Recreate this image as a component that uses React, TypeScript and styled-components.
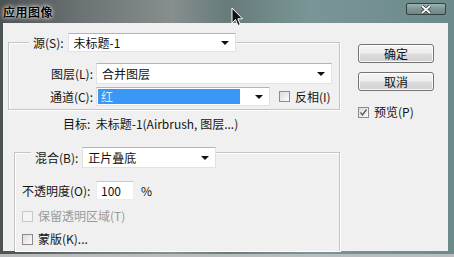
import React from "react";
import styled, { createGlobalStyle } from "styled-components";

const GlobalStyle = createGlobalStyle`
  html, body {
    margin: 0;
    padding: 0;
    background: #b9bdbd;
  }
  body {
    font-family: "Noto Sans CJK SC", "Liberation Sans", sans-serif;
    font-size: 12px;
    color: #111;
  }
`;

const Window = styled.div`
  position: relative;
  width: 454px;
  height: 254px;
  display: flex;
  flex-direction: column;
  background: linear-gradient(
    90deg,
    #4c5152 0%,
    #6c7374 18%,
    #878e8e 38%,
    #677b7b 50%,
    #7a9595 68%,
    #6c8a8a 100%
  );
`;

const TitleBar = styled.div`
  height: 23px;
  display: flex;
  align-items: center;
  justify-content: space-between;
  padding: 0 8px 0 3px;
  box-sizing: border-box;
`;

const Title = styled.span`
  font-size: 12px;
  font-weight: 700;
  color: #050505;
  letter-spacing: 0.5px;
  text-shadow: 0 0 2px #fff, 0 0 5px rgba(255, 255, 255, 0.85);
  margin-top: -1px;
`;

const CloseButton = styled.div`
  position: absolute;
  left: 406px;
  top: 3px;
  width: 40px;
  height: 12px;
  box-sizing: border-box;
  border: 1px solid #324040;
  border-radius: 2px;
  background: linear-gradient(180deg, #9db1b1 0%, #7f9696 50%, #6d8686 100%);
  display: flex;
  align-items: center;
  justify-content: center;
`;

const Cursor = styled.svg`
  position: absolute;
  left: 231px;
  top: 7px;
`;

const Body = styled.div`
  flex: 1;
  margin: 0 6px 3px 3px;
  background: #f0f0f0;
  display: flex;
`;

const LeftCol = styled.div`
  width: 338px;
  display: flex;
  flex-direction: column;
`;

const GroupBox = styled.div<{ $top: number; $left: number; $width: number; $height?: number }>`
  margin: ${(p) => p.$top}px 0 0 ${(p) => p.$left}px;
  width: ${(p) => p.$width}px;
  ${(p) => (p.$height ? `height: ${p.$height}px;` : "flex: 1;")}
  box-sizing: border-box;
  border: 1px solid #c4c4c4;
  ${(p) => (p.$height ? "" : "border-bottom: none;")}
  box-shadow: inset 1px 1px 0 #fff, 1px 1px 0 #fff;
  display: flex;
  flex-direction: column;
`;

const Legend = styled.div<{ $lift: number; $indent: number }>`
  display: flex;
  align-items: center;
  align-self: flex-start;
  gap: 4px;
  margin: -${(p) => p.$lift}px 0 0 ${(p) => p.$indent}px;
  padding-left: 4px;
  background: #f0f0f0;
`;

const Label = styled.span<{ $width?: number; $right?: boolean; $dim?: boolean }>`
  display: inline-block;
  ${(p) => (p.$width ? `width: ${p.$width}px;` : "")}
  text-align: ${(p) => (p.$right ? "right" : "left")};
  color: ${(p) => (p.$dim ? "#9a9a9a" : "#151515")};
  white-space: nowrap;
  line-height: 16px;
`;

const Combo = styled.div<{ $width: number; $height: number }>`
  width: ${(p) => p.$width}px;
  height: ${(p) => p.$height}px;
  box-sizing: border-box;
  background: #fff;
  border: 1px solid #e2e2e2;
  border-top-color: #b4b4b4;
  display: flex;
  align-items: center;
  padding: 0 6px 0 5px;
  position: relative;
`;

const ComboText = styled.span<{ $selected?: boolean }>`
  flex: 1;
  line-height: 15px;
  align-self: stretch;
  display: flex;
  align-items: center;
  ${(p) =>
    p.$selected
      ? `background: #3a97f5; color: #dce9ff; margin: 1px 15px 1px -4px; padding-left: 3px;`
      : ""}
`;

const Arrow = styled.span`
  width: 0;
  height: 0;
  border-left: 4px solid transparent;
  border-right: 4px solid transparent;
  border-top: 4px solid #111;
`;

const Row = styled.div<{ $top: number; $indent?: number }>`
  display: flex;
  align-items: center;
  margin-top: ${(p) => p.$top}px;
  padding-left: ${(p) => p.$indent ?? 0}px;
  gap: 3px;
`;

const TargetLine = styled.div`
  margin: 6px 0 0 60px;
  line-height: 16px;
  white-space: nowrap;
  color: #151515;
`;

const Input = styled.div`
  width: 38px;
  height: 19px;
  box-sizing: border-box;
  background: #fff;
  border: 1px solid #ececec;
  border-top-color: #c8c8c8;
  padding-left: 4px;
  line-height: 17px;
`;

const Percent = styled.span`
  margin-left: 7px;
`;

const Box = styled.span<{ $disabled?: boolean }>`
  width: 11px;
  height: 11px;
  box-sizing: border-box;
  border: 1px solid ${(p) => (p.$disabled ? "#c8c8c8" : "#8c8c8c")};
  background: ${(p) =>
    p.$disabled ? "#f4f4f4" : "linear-gradient(135deg, #dcdcdc, #fbfbfb)"};
  display: inline-flex;
  align-items: center;
  justify-content: center;
  margin-right: 2px;
`;

const RightCol = styled.div`
  margin-left: 17px;
  padding-top: 21px;
  display: flex;
  flex-direction: column;
`;

const Button = styled.div<{ $gap: number }>`
  width: 76px;
  height: 19px;
  margin-top: ${(p) => p.$gap}px;
  box-sizing: border-box;
  border: 1px solid #747474;
  border-radius: 3px;
  background: linear-gradient(180deg, #f5f5f5 0%, #ececec 48%, #dcdcdc 52%, #d2d2d2 100%);
  box-shadow: inset 0 0 0 1px rgba(255, 255, 255, 0.8);
  display: flex;
  align-items: center;
  justify-content: center;
  line-height: 16px;
`;

function CheckBox({ checked, disabled }: { checked?: boolean; disabled?: boolean }) {
  return (
    <Box $disabled={disabled}>
      {checked && (
        <svg width="9" height="9" viewBox="0 0 9 9">
          <path d="M1.5 4.5 L3.5 7 L7.5 1.5" stroke="#4a5a6a" strokeWidth="1.3" fill="none" />
        </svg>
      )}
    </Box>
  );
}

export default function App() {
  return (
    <>
      <GlobalStyle />
      <Window>
        <TitleBar>
          <Title>应用图像</Title>
        </TitleBar>
        <CloseButton>
          <svg width="12" height="9" viewBox="0 0 12 9">
            <path d="M2 1 L10 8 M10 1 L2 8" stroke="#263030" strokeWidth="3.2" />
            <path d="M2 1 L10 8 M10 1 L2 8" stroke="#fff" strokeWidth="1.8" />
          </svg>
        </CloseButton>
        <Body>
          <LeftCol>
            <GroupBox $top={19} $left={5} $width={332} $height={68}>
              <Legend $lift={10} $indent={20}>
                <Label>源(S):</Label>
                <Combo $width={168} $height={19}>
                  <ComboText>未标题-1</ComboText>
                  <Arrow />
                </Combo>
              </Legend>
              <Row $top={11}>
                <Label $width={84} $right>
                  图层(L):
                </Label>
                <Combo $width={236} $height={21}>
                  <ComboText>合并图层</ComboText>
                  <Arrow />
                </Combo>
              </Row>
              <Row $top={3}>
                <Label $width={84} $right>
                  通道(C):
                </Label>
                <Combo $width={174} $height={19}>
                  <ComboText $selected>红</ComboText>
                  <Arrow />
                </Combo>
                <Row $top={0} $indent={6}>
                  <CheckBox />
                  <Label>反相(I)</Label>
                </Row>
              </Row>
            </GroupBox>
            <TargetLine>目标:&nbsp;&nbsp;未标题-1(Airbrush, 图层...)</TargetLine>
            <GroupBox $top={20} $left={11} $width={326}>
              <Legend $lift={6} $indent={16}>
                <Label>混合(B):</Label>
                <Combo $width={134} $height={21}>
                  <ComboText>正片叠底</ComboText>
                  <Arrow />
                </Combo>
              </Legend>
              <Row $top={13} $indent={7} style={{ gap: 0 }}>
                <Label $width={74}>不透明度(O):</Label>
                <Input>100</Input>
                <Percent>%</Percent>
              </Row>
              <Row $top={8} $indent={7}>
                <CheckBox disabled />
                <Label $dim>保留透明区域(T)</Label>
              </Row>
              <Row $top={7} $indent={7}>
                <CheckBox />
                <Label>蒙版(K)...</Label>
              </Row>
            </GroupBox>
          </LeftCol>
          <RightCol>
            <Button $gap={0}>确定</Button>
            <Button $gap={9}>取消</Button>
            <Row $top={13}>
              <CheckBox checked />
              <Label>预览(P)</Label>
            </Row>
          </RightCol>
        </Body>
        <Cursor width="13" height="21" viewBox="0 0 13 21">
          <path
            d="M1 1 L1 16 L4.5 12.5 L7 18.5 L9.3 17.5 L6.8 11.8 L11.5 11.8 Z"
            fill="#111"
            stroke="#fff"
            strokeWidth="1"
            strokeLinejoin="round"
          />
        </Cursor>
      </Window>
    </>
  );
}
